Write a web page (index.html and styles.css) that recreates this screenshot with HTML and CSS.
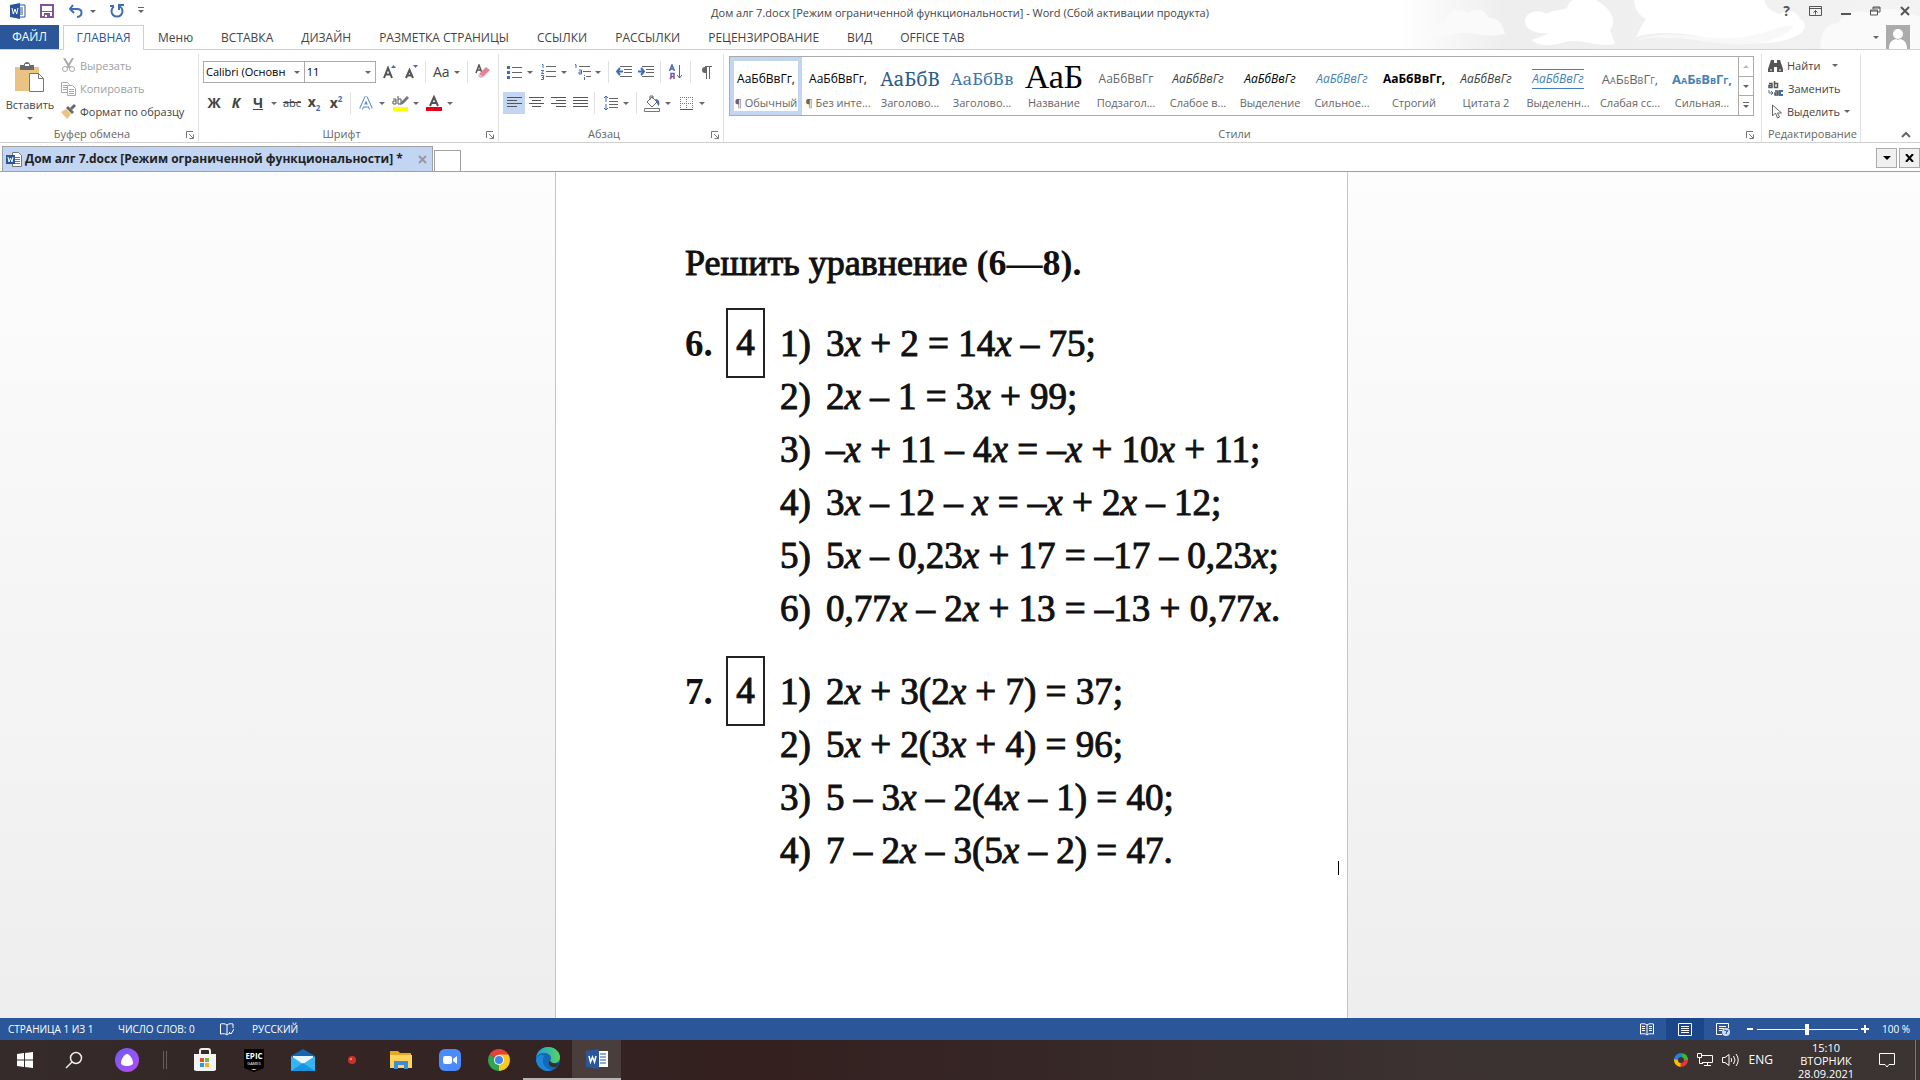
FILE: index.html
```html
<!DOCTYPE html>
<html lang="ru">
<head>
    <meta charset="UTF-8">
    <meta name="viewport" content="width=device-width, initial-scale=1.0">
    <title>Дом алг 7.docx - Word</title>
    <link rel="stylesheet" href="styles.css">
</head>
<body>
    <header class="top">
        <svg class="clouds" width="520" height="49" viewBox="0 0 520 49" aria-hidden="true">
            <defs>
                <linearGradient id="sky" x1="0" x2="1" y1="0" y2="0">
                    <stop offset="0" stop-color="#fff"/>
                    <stop offset=".2" stop-color="#eeeeee"/>
                    <stop offset="1" stop-color="#f3f3f3"/>
                </linearGradient>
            </defs>
            <rect width="520" height="49" fill="url(#sky)"/>
            <path d="M22 36c10-5 14-13 22-14 3-12 16-16 24-8 8-8 18-4 20 4 9-1 15 5 17 16-22 5-30-3-46-1s-24 8-37 3z" fill="#fafafa"/>
            <path d="M126 26c-6-14 14-18 20-12 9-6 20-2 22-8 1-5 4-6 8-6h20c14 8 22 20 14 30l5 14c-18 4-34-6-50-2-16 5-26 4-34-2 8-3 16-5 18-7-10 1-18-1-23-7z" fill="#fff"/>
            <path d="M234 0h130c2 8 8 12 16 14 8-6 18-2 20 5 8 3 6 14-6 18-24 10-50 6-78 2-26-4-52-10-80-2 4-8 6-12 10-18-8-4-12-12-12-19z" fill="#fff"/>
            <path d="M236 40c34-12 64 0 92-2 34 0 48-14 66-12-10 14-38 20-64 18-30-2-60-10-94-4z" fill="#f8f8f8"/>
            <path d="M420 49c0-14 6-26 18-26 6-10 20-14 34-10 14-8 30-4 48 4v32z" fill="#fafafa"/>
        </svg>
        <div class="titlebar">
            <div class="quick">
                <svg width="16" height="16" viewBox="0 0 16 16"><path d="M8 2h7v12H8z" fill="#fff" stroke="#2b579a"/><path d="M9 5h4M9 7h4M9 9h4M9 11h4" stroke="#2b579a"/><path d="M0 2l10-2v16L0 14z" fill="#2b579a"/><path d="M2 5l1.300 6L5 6l1.700 5L8 5" fill="none" stroke="#fff"/></svg>
                <button class="plain" aria-label="Сохранить"><svg width="14" height="14" viewBox="0 0 14 14"><path d="M1 1h12v12H1z" fill="#fff" stroke="#80539d" stroke-width="2"/><path d="M2 7h10v1H2z" fill="#80539d"/><path d="M4 9h6v4H4z" fill="#80539d"/><path d="M5 11h2v2H5z" fill="#fff"/></svg></button>
                <button class="plain undo" aria-label="Отменить"><svg width="16" height="14" viewBox="0 0 16 14"><path d="M5 1L2 5l4 4M2 5h7c6 0 6 7 0 8" fill="none" stroke="#3e6db5" stroke-width="2"/></svg><i class="caret"></i></button>
                <button class="plain" aria-label="Повторить"><svg width="14" height="14" viewBox="0 0 14 14"><path d="M4 2.500A5.500 5.500 0 1 0 10 2.500M4 2h-4M9 6V1h5" fill="none" stroke="#3e6db5" stroke-width="2"/></svg></button>
                <button class="plain" aria-label="Настройка панели"><svg width="6" height="8" viewBox="0 0 6 8"><path d="M0 .5h6" stroke="#666"/><path d="M0 3h6L3 6z" fill="#666"/></svg></button>
            </div>
            <div class="title">Дом алг 7.docx [Режим ограниченной функциональности] - Word (Сбой активации продукта)</div>
            <div class="winbtns">
                <button class="plain" aria-label="Справка"><b>?</b></button>
                <button class="plain" aria-label="Параметры ленты"><svg width="13" height="10" viewBox="0 0 13 10"><path d="M.5.5h12v9H.5zM1 2.500h11M6.500 8.500v-4M4.500 6.500l2-2 2 2" fill="none" stroke="#555"/></svg></button>
                <button class="plain" aria-label="Свернуть"><svg width="10" height="10" viewBox="0 0 10 10"><path d="M0 7h10v2H0z" fill="#555"/></svg></button>
                <button class="plain" aria-label="Восстановить"><svg width="11" height="10" viewBox="0 0 11 10"><path d="M3 3V1h7v5H8M.5 4h7v5h-7zM.5 5h7M3 2h7" fill="none" stroke="#555"/></svg></button>
                <button class="plain" aria-label="Закрыть"><svg width="10" height="10" viewBox="0 0 10 10"><path d="M1 1l8 8M9 1L1 9" stroke="#555" stroke-width="2"/></svg></button>
            </div>
        </div>
        <nav class="tabs">
            <button class="file">ФАЙЛ</button>
            <button class="tab active">ГЛАВНАЯ</button>
            <button class="tab">Меню</button>
            <button class="tab">ВСТАВКА</button>
            <button class="tab">ДИЗАЙН</button>
            <button class="tab">РАЗМЕТКА СТРАНИЦЫ</button>
            <button class="tab">ССЫЛКИ</button>
            <button class="tab">РАССЫЛКИ</button>
            <button class="tab">РЕЦЕНЗИРОВАНИЕ</button>
            <button class="tab">ВИД</button>
            <button class="tab">OFFICE TAB</button>
            <button class="plain account" aria-label="Учетная запись"><i class="caret"></i><svg width="24" height="24" viewBox="0 0 24 24"><path d="M0 0h24v24H0z" fill="#ababab"/><circle cx="12" cy="9" r="5" fill="#fff"/><path d="M3 24c0-7 3-9 7-10l2 1 2-1c4 1 7 3 7 10z" fill="#fff"/></svg></button>
        </nav>
    </header>

    <main class="ribbon">
        <section class="group clipboard">
            <div class="content">
                <button class="plain paste">
                    <svg width="30" height="31" viewBox="0 0 30 31"><path d="M0 5h24v24H0z" fill="#eac282"/><path d="M5 3h4c0-4 6-4 6 0h4v5H5z" fill="#6a6a6a"/><path d="M10 3h4" stroke="#fff" stroke-width="2"/><path d="M14.500 11.500h9l5 5v13h-14z" fill="#fff" stroke="#777"/><path d="M23.500 11.500v5h5" fill="none" stroke="#777"/></svg>
                    <span>Вставить</span>
                    <i class="caret"></i>
                </button>
                <div class="list">
                    <button class="plain off"><svg width="15" height="15" viewBox="0 0 15 15"><path d="M3 0l6 10M12 0L6 10" stroke="#aaa" stroke-width="2"/><circle cx="4" cy="11" r="2.500" fill="none" stroke="#aaa"/><circle cx="11" cy="11" r="2.500" fill="none" stroke="#aaa"/></svg>Вырезать</button>
                    <button class="plain off"><svg width="15" height="15" viewBox="0 0 15 15"><path d="M.5 1.500h6l2 2v8h-8zM2 4.500h4M2 6.500h4M2 8.500h4" fill="#fff" stroke="#aaa"/><path d="M6.500 4.500h5l3 3v7h-8zM8 8.500h5M8 10.500h5M8 12.500h5" fill="#fff" stroke="#aaa"/></svg>Копировать</button>
                    <button class="plain"><svg width="15" height="15" viewBox="0 0 15 15"><path d="M0 8l5-3 5 5-4 5z" fill="#eac282"/><path d="M5 4l2-2 6 6-2 2z" fill="#666"/><path d="M9 4l4-4 2 2-4 4z" fill="#666"/></svg>Формат по образцу</button>
                </div>
            </div>
            <div class="label">Буфер обмена<button class="plain launch" aria-label="Буфер обмена"><svg width="8" height="8" viewBox="0 0 8 8"><path d="M.5 7V.5H7M3 3l4 4M7.500 3.500v4h-4" fill="none" stroke="#777"/></svg></button></div>
        </section>

        <section class="group font">
            <div class="content rows">
                <div class="row">
                    <label class="combo name"><select aria-label="Шрифт"><option>Calibri (Основн</option></select><i class="caret"></i></label>
                    <label class="combo size"><select aria-label="Размер шрифта"><option>11</option></select><i class="caret"></i></label>
                    <button class="tool" aria-label="Увеличить размер"><svg width="13" height="14" viewBox="0 0 13 14"><path d="M1 13L5 3l4 10M2.500 9.500h5" fill="none" stroke="#555" stroke-width="2"/><path d="M8 3l2.500-3L13 3z" fill="#3e6db5"/></svg></button>
                    <button class="tool" aria-label="Уменьшить размер"><svg width="13" height="14" viewBox="0 0 13 14"><path d="M1 13L4.500 5 8 13M2.500 10.500h4" fill="none" stroke="#555" stroke-width="2"/><path d="M8 0l2.500 3L13 0z" fill="#3e6db5"/></svg></button>
                    <i class="sep"></i>
                    <button class="tool split" aria-label="Регистр"><span class="face">Aa</span><i class="caret"></i></button>
                    <i class="sep"></i>
                    <button class="tool" aria-label="Очистить формат"><svg width="16" height="16" viewBox="0 0 16 16"><path d="M1 9l3-8 3 8M2 6h4" fill="none" stroke="#555" stroke-width="1.500"/><path d="M4 10l7-7 4 3-7 7z" fill="#e8819b"/><path d="M4 10l4 3-1 1H5l-2-2z" fill="#f4b5c3"/></svg></button>
                </div>
                <div class="row">
                    <button class="tool"><b>Ж</b></button>
                    <button class="tool"><b class="it">К</b></button>
                    <button class="tool split"><span class="face"><b class="un">Ч</b></span><i class="caret"></i></button>
                    <button class="tool"><s>abc</s></button>
                    <button class="tool"><b>x<sub>2</sub></b></button>
                    <button class="tool"><b>x<sup>2</sup></b></button>
                    <i class="sep"></i>
                    <button class="tool split" aria-label="Текстовые эффекты"><span class="face"><svg width="14" height="15" viewBox="0 0 14 15"><path d="M2 13L7 2l5 11M4 9.500h6" fill="none" stroke="#4f86c6" stroke-width="4" stroke-linejoin="round"/><path d="M2 13L7 2l5 11M4 9.500h6" fill="none" stroke="#fff" stroke-width="2"/></svg></span><i class="caret"></i></button>
                    <button class="tool split" aria-label="Цвет выделения"><span class="face"><svg width="17" height="17" viewBox="0 0 17 17"><path d="M1 12h15v4H1z" fill="#ff0"/><path d="M1 4h3v5H1V6h3M6 1v8h3V4H6" fill="none" stroke="#555"/><path d="M8 10l1-3 6-6 2 2-6 6z" fill="#777"/></svg></span><i class="caret"></i></button>
                    <button class="tool split" aria-label="Цвет текста"><span class="face"><svg width="16" height="17" viewBox="0 0 16 17"><path d="M4 11L8 2l4 9M5.500 8h5" fill="none" stroke="#555" stroke-width="2"/><path d="M0 12h16v4H0z" fill="#e3001b"/></svg></span><i class="caret"></i></button>
                </div>
            </div>
            <div class="label">Шрифт<button class="plain launch" aria-label="Шрифт"><svg width="8" height="8" viewBox="0 0 8 8"><path d="M.5 7V.5H7M3 3l4 4M7.500 3.500v4h-4" fill="none" stroke="#777"/></svg></button></div>
        </section>

        <section class="group para">
            <div class="content rows">
                <div class="row">
                    <button class="tool split" aria-label="Маркеры"><span class="face"><svg width="15" height="15" viewBox="0 0 15 15"><path d="M5 2.500h10M5 7.500h10M5 12.500h10" stroke="#666"/><path d="M0 1h3v3H0zM0 6h3v3H0zM0 11h3v3H0z" fill="#3e6db5"/></svg></span><i class="caret"></i></button>
                    <button class="tool split" aria-label="Нумерация"><span class="face"><svg width="15" height="16" viewBox="0 0 15 16"><path d="M5 2.500h10M5 7.500h10M5 12.500h10" stroke="#666"/><path d="M1 .5h1V4M0 6.500h2.500L.5 9.500H3M0 11.500h2.500v4H0M1 13.500h1" fill="none" stroke="#3e6db5"/></svg></span><i class="caret"></i></button>
                    <button class="tool split" aria-label="Многоуровневый список"><span class="face"><svg width="17" height="16" viewBox="0 0 17 16"><path d="M5 2.500h11M9 7.500h8M12 12.500h5" stroke="#666"/><path d="M1 .5h1V4M5 6h2.500v4H5V8h2M10.500 11v1M10.500 13v3" fill="none" stroke="#3e6db5"/></svg></span><i class="caret"></i></button>
                    <i class="sep"></i>
                    <button class="tool" aria-label="Уменьшить отступ"><svg width="16" height="12" viewBox="0 0 16 12"><path d="M4 .5h12M8 3.500h8M8 6.500h8M4 10.500h12" stroke="#666"/><path d="M7 5.500H1M4 2L1 5.500 4 9" fill="none" stroke="#3e6db5" stroke-width="2"/></svg></button>
                    <button class="tool" aria-label="Увеличить отступ"><svg width="16" height="12" viewBox="0 0 16 12"><path d="M4 .5h12M8 3.500h8M8 6.500h8M4 10.500h12" stroke="#666"/><path d="M0 5.500h6M3 2l3 3.500L3 9" fill="none" stroke="#3e6db5" stroke-width="2"/></svg></button>
                    <i class="sep"></i>
                    <button class="tool" aria-label="Сортировка"><svg width="14" height="16" viewBox="0 0 14 16"><path d="M.5 7l2.500-6 2.500 6M1.500 5h3" fill="none" stroke="#3e6db5" stroke-width="1.500"/><path d="M5 15V9.500H2v3h3M3 12.500L1 15" fill="none" stroke="#80539d" stroke-width="1.500"/><path d="M10.500 1v13M8 11l2.500 3 2.500-3" fill="none" stroke="#666"/></svg></button>
                    <i class="sep"></i>
                    <button class="tool" aria-label="Знаки абзаца"><svg width="11" height="13" viewBox="0 0 11 13"><path d="M5 1H4a3 3 0 0 0 0 6h1z" fill="#666"/><path d="M11 .5H4M5.500 0v13M8.500 0v13" fill="none" stroke="#666"/></svg></button>
                </div>
                <div class="row">
                    <button class="tool on" aria-label="По левому краю"><svg width="15" height="12" viewBox="0 0 15 12"><path d="M0 .5h15M0 3.500h10M0 6.500h15M0 9.500h10" stroke="#555"/></svg></button>
                    <button class="tool" aria-label="По центру"><svg width="15" height="12" viewBox="0 0 15 12"><path d="M0 .5h15M3 3.500h9M0 6.500h15M3 9.500h9" stroke="#555"/></svg></button>
                    <button class="tool" aria-label="По правому краю"><svg width="15" height="12" viewBox="0 0 15 12"><path d="M0 .5h15M5 3.500h10M0 6.500h15M5 9.500h10" stroke="#555"/></svg></button>
                    <button class="tool" aria-label="По ширине"><svg width="15" height="12" viewBox="0 0 15 12"><path d="M0 .5h15M0 3.500h15M0 6.500h15M0 9.500h15" stroke="#555"/></svg></button>
                    <i class="sep"></i>
                    <button class="tool split" aria-label="Интервал"><span class="face"><svg width="15" height="16" viewBox="0 0 15 16"><path d="M6 3.500h9M6 6.500h9M6 9.500h9M6 12.500h9" stroke="#666"/><path d="M3 1v6M3 9v6M1 3l2-2 2 2M1 13l2 2 2-2" fill="none" stroke="#3e6db5"/></svg></span><i class="caret"></i></button>
                    <i class="sep"></i>
                    <button class="tool split" aria-label="Заливка"><span class="face"><svg width="17" height="17" viewBox="0 0 17 17"><path d="M3 7l5-5 5 5-5 5zM6 5V1h3v3" fill="#fff" stroke="#666"/><path d="M11 4c4 0 5 3 4 7-2-1-2-3-2-4z" fill="#3e6db5"/><path d="M.5 13.500h15v3H.5z" fill="#fff" stroke="#777"/></svg></span><i class="caret"></i></button>
                    <button class="tool split" aria-label="Границы"><span class="face"><svg width="13" height="13" viewBox="0 0 13 13"><path d="M.5 0v12M6.500 0v12M12.500 0v12M0 .5h13M0 6.500h13" stroke="#777" stroke-dasharray="1 1"/><path d="M0 12.500h13" stroke="#555"/></svg></span><i class="caret"></i></button>
                </div>
            </div>
            <div class="label">Абзац<button class="plain launch" aria-label="Абзац"><svg width="8" height="8" viewBox="0 0 8 8"><path d="M.5 7V.5H7M3 3l4 4M7.500 3.500v4h-4" fill="none" stroke="#777"/></svg></button></div>
        </section>

        <section class="group styles">
            <div class="gallery">
                <button class="style chosen"><span class="demo">АаБбВвГг,</span><span>¶ Обычный</span></button>
                <button class="style"><span class="demo">АаБбВвГг,</span><span>¶ Без инте...</span></button>
                <button class="style"><span class="demo head1">АаБбВ</span><span>Заголово...</span></button>
                <button class="style"><span class="demo head2">АаБбВв</span><span>Заголово...</span></button>
                <button class="style"><span class="demo big">АаБ</span><span>Название</span></button>
                <button class="style"><span class="demo grey">АаБбВвГг</span><span>Подзагол...</span></button>
                <button class="style"><span class="demo it soft">АаБбВвГг</span><span>Слабое в...</span></button>
                <button class="style"><span class="demo it">АаБбВвГг</span><span>Выделение</span></button>
                <button class="style"><span class="demo it blue">АаБбВвГг</span><span>Сильное...</span></button>
                <button class="style"><span class="demo strong">АаБбВвГг,</span><span>Строгий</span></button>
                <button class="style"><span class="demo it soft">АаБбВвГг</span><span>Цитата 2</span></button>
                <button class="style"><span class="demo it blue lined">АаБбВвГг</span><span>Выделенн...</span></button>
                <button class="style"><span class="demo caps grey">АаБбВвГг,</span><span>Слабая сс...</span></button>
                <button class="style"><span class="demo caps strong blue">АаБбВвГг,</span><span>Сильная...</span></button>
                <div class="scroller">
                    <button class="plain" aria-label="Вверх"><i class="caret up"></i></button>
                    <button class="plain" aria-label="Вниз"><i class="caret"></i></button>
                    <button class="plain" aria-label="Все стили"><svg width="6" height="7" viewBox="0 0 6 7"><path d="M0 .5h6" stroke="#666"/><path d="M0 3h6L3 6z" fill="#666"/></svg></button>
                </div>
            </div>
            <div class="label">Стили<button class="plain launch" aria-label="Стили"><svg width="8" height="8" viewBox="0 0 8 8"><path d="M.5 7V.5H7M3 3l4 4M7.500 3.500v4h-4" fill="none" stroke="#777"/></svg></button></div>
        </section>

        <section class="group edit">
            <div class="content list">
                <button class="plain"><svg width="15" height="14" viewBox="0 0 15 14"><path d="M3 1h3v3h3V1h3l3 9v3h-6V8H6v5H0v-3z" fill="#555"/><path d="M2 11h2M11 11h2" stroke="#fff"/></svg>Найти<i class="caret far"></i></button>
                <button class="plain"><svg width="16" height="15" viewBox="0 0 16 15"><path d="M1 2.500h3v4H1v-2h3M6.500 0v6.500h3v-4h-3M7 10h3v4H7v-2h3" fill="none" stroke="#555" stroke-width="1.500"/><path d="M15 10h-3v4h3" fill="none" stroke="#3e6db5" stroke-width="2"/><path d="M1 9v3h4M3 10l2 2-2 2" fill="none" stroke="#3e6db5"/></svg>Заменить</button>
                <button class="plain"><svg width="15" height="15" viewBox="0 0 15 15"><path d="M4.500 1v11l3-3 2 5 2-1-2-4h4z" fill="#fff" stroke="#666"/></svg>Выделить<i class="caret"></i></button>
            </div>
            <div class="label">Редактирование</div>
        </section>
        <button class="plain collapse" aria-label="Свернуть ленту"><svg width="10" height="7" viewBox="0 0 10 7"><path d="M1 6l4-4 4 4" fill="none" stroke="#666" stroke-width="2"/></svg></button>
    </main>

    <div class="doctabs">
        <div class="doctab">
            <svg width="16" height="15" viewBox="0 0 16 15"><path d="M6.500.5h6l3 3v11h-9z" fill="#fff" stroke="#777"/><path d="M9 5.500h5M9 7.500h5M9 9.500h5M9 11.500h5" stroke="#777"/><path d="M0 3h9v9H0z" fill="#2b579a"/><path d="M2 5l1 5 1.500-4L6 10l1-5" fill="none" stroke="#fff"/></svg>
            <span>Дом алг 7.docx [Режим ограниченной функциональности] *</span>
            <button class="plain" aria-label="Закрыть вкладку"><svg width="9" height="9" viewBox="0 0 9 9"><path d="M1 1l7 7M8 1L1 8" stroke="#999" stroke-width="2"/></svg></button>
        </div>
        <button class="newtab" aria-label="Новая вкладка"></button>
        <button class="tabbtn" aria-label="Список вкладок"><i class="caret dark"></i></button>
        <button class="tabbtn" aria-label="Закрыть"><svg width="9" height="8" viewBox="0 0 9 8"><path d="M1 0l7 8M8 0L1 8" stroke="#000" stroke-width="2"/></svg></button>
    </div>

    <div class="workspace">
        <article class="page">
            <h1>Решить уравнение <b>(6—8).</b></h1>
            <section class="task">
                <b>6.</b><span class="level">4</span>
                <ol>
                    <li><span>1)</span>3<i>x</i> + 2 = 14<i>x</i> – 75;</li>
                    <li><span>2)</span>2<i>x</i> – 1 = 3<i>x</i> + 99;</li>
                    <li><span>3)</span>–<i>x</i> + 11 – 4<i>x</i> = –<i>x</i> + 10<i>x</i> + 11;</li>
                    <li><span>4)</span>3<i>x</i> – 12 – <i>x</i> = –<i>x</i> + 2<i>x</i> – 12;</li>
                    <li><span>5)</span>5<i>x</i> – 0,23<i>x</i> + 17 = –17 – 0,23<i>x</i>;</li>
                    <li><span>6)</span>0,77<i>x</i> – 2<i>x</i> + 13 = –13 + 0,77<i>x</i>.</li>
                </ol>
            </section>
            <section class="task">
                <b>7.</b><span class="level">4</span>
                <ol>
                    <li><span>1)</span>2<i>x</i> + 3(2<i>x</i> + 7) = 37;</li>
                    <li><span>2)</span>5<i>x</i> + 2(3<i>x</i> + 4) = 96;</li>
                    <li><span>3)</span>5 – 3<i>x</i> – 2(4<i>x</i> – 1) = 40;</li>
                    <li><span>4)</span>7 – 2<i>x</i> – 3(5<i>x</i> – 2) = 47.</li>
                </ol>
            </section>
            <i class="cursor"></i>
        </article>
    </div>

    <footer class="status">
        <span class="pages">СТРАНИЦА 1 ИЗ 1</span>
        <span class="words">ЧИСЛО СЛОВ: 0</span>
        <svg width="14" height="13" viewBox="0 0 14 13"><path d="M7 2v10M7 2C5 .5 3 .5.5 1v10c3-.5 5-.5 6.500 1 1-1 2-1.500 3-1.500M7 2c2-1.500 4-1.500 6-1v4M9 9l2 2 3-5" fill="none" stroke="#fff"/></svg>
        <span class="lang">РУССКИЙ</span>
        <div class="views">
            <button class="plain" aria-label="Режим чтения"><svg width="14" height="13" viewBox="0 0 14 13"><path d="M7 2v10M7 2C5 .5 3 .5.5 1v10c3-.5 5-.5 6.500 1 1.500-1.500 3.500-1.500 6.500-1V1C11 .5 9 .5 7 2M2 3.500h3M2 5.500h3M2 7.500h3M9 3.500h3M9 5.500h3M9 7.500h3" fill="none" stroke="#fff"/></svg></button>
            <button class="plain picked" aria-label="Разметка страницы"><svg width="14" height="13" viewBox="0 0 14 13"><path d="M.5.5h13v12H.5zM3 3.500h8M3 5.500h8M3 7.500h8M3 9.500h8" fill="none" stroke="#fff"/></svg></button>
            <button class="plain" aria-label="Веб-документ"><svg width="14" height="13" viewBox="0 0 14 13"><path d="M6 11.500H.5V.5h12V5M3 3.500h7M3 5.500h5M3 7.500h3" fill="none" stroke="#fff"/><circle cx="10" cy="9" r="4" fill="#cfdcf0"/><path d="M8 7l3 1-1 3M12 7l-1 2" stroke="#2b579a" fill="none"/></svg></button>
        </div>
        <button class="plain" aria-label="Уменьшить"><svg width="8" height="8" viewBox="0 0 8 8"><path d="M1 3h6v2H1z" fill="#fff"/></svg></button>
        <input class="zoom" type="range" min="0" max="100" value="50" aria-label="Масштаб">
        <button class="plain" aria-label="Увеличить"><svg width="8" height="8" viewBox="0 0 8 8"><path d="M0 3h8v2H0zM3 0h2v8H3z" fill="#fff"/></svg></button>
        <span class="percent">100 %</span>
    </footer>

    <footer class="taskbar">
        <button class="app" aria-label="Пуск"><svg width="16" height="16" viewBox="0 0 16 16"><path d="M0 2l7-1v6.500H0zM8 1l8-1v7.500H8zM0 8.500h7V15l-7-1zM8 8.500h8V16l-8-1z" fill="#fff"/></svg></button>
        <button class="app" aria-label="Поиск"><svg width="18" height="18" viewBox="0 0 18 18"><circle cx="11" cy="7" r="5.500" fill="none" stroke="#eee" stroke-width="1.500"/><path d="M7 11l-6 6" stroke="#eee" stroke-width="1.500"/></svg></button>
        <button class="app alice" aria-label="Алиса"><svg width="24" height="24" viewBox="0 0 24 24"><defs><linearGradient id="al" x1="0" x2="1" y1="0" y2="1"><stop offset="0" stop-color="#6f5cf5"/><stop offset="1" stop-color="#b34cf2"/></linearGradient></defs><circle cx="12" cy="12" r="12" fill="url(#al)"/><path d="M12 6c3 0 6 6 6 9 0 4-12 4-12 0 0-3 3-9 6-9z" fill="#fff"/></svg></button>
        <i class="split-line"></i>
        <button class="app" aria-label="Store"><svg width="24" height="24" viewBox="0 0 24 24"><path d="M7 7V3q0-2 2-2h6q2 0 2 2v4" fill="none" stroke="#eee" stroke-width="2"/><path d="M1 6h22v16l-2 1H3l-2-1z" fill="#f3f3f3"/><path d="M7 10h4v4H7z" fill="#d8572a"/><path d="M12 10h4v4h-4z" fill="#7cb542"/><path d="M7 15h4v4H7z" fill="#2a9bd8"/><path d="M12 15h4v4h-4z" fill="#f3b21c"/></svg></button>
        <button class="app" aria-label="Epic Games"><svg width="22" height="24" viewBox="0 0 22 24"><path d="M1 1h20v19l-10 4-10-4z" fill="#000"/><path d="M8 21h6l-3 1z" fill="#fff"/><text class="epic" x="11" y="11" text-anchor="middle">EPIC</text><text class="epic-sub" x="11" y="17" text-anchor="middle">GAMES</text></svg></button>
        <button class="app" aria-label="Почта"><svg width="24" height="24" viewBox="0 0 24 24"><path d="M0 8l12-7 12 7v15H0z" fill="#1266b4"/><path d="M2 8h20v10H2z" fill="#eaf4fb"/><path d="M0 8l12 8L24 8v15H0z" fill="#35b5f1"/><path d="M0 23l12-8 12 8z" fill="#1c93dd"/></svg></button>
        <button class="app" aria-label="Запись"><svg width="8" height="8" viewBox="0 0 8 8"><circle cx="4" cy="4" r="4" fill="#c8322a"/><circle cx="3" cy="3" r="1" fill="#f5a79a"/></svg></button>
        <button class="app" aria-label="Проводник"><svg width="22" height="20" viewBox="0 0 22 20"><path d="M0 1h8l2 2h11v15H0z" fill="#e8a820"/><path d="M0 5h22v13H0z" fill="#ffd45c"/><path d="M4 11h14v8h-4v-4H8v4H4z" fill="#3c8fd6"/></svg></button>
        <button class="app" aria-label="Zoom"><svg width="24" height="24" viewBox="0 0 24 24"><rect x="1" y="1" width="22" height="22" rx="6" fill="#4a8cff"/><rect x="5" y="8" width="9" height="8" rx="2" fill="#fff"/><path d="M15 11l4-3v8l-4-3z" fill="#fff"/></svg></button>
        <button class="app" aria-label="Chrome"><svg width="22" height="22" viewBox="0 0 22 22"><path d="M11 11L1.500 5.500A11 11 0 0 1 20.500 5.500z" fill="#e0443a"/><path d="M11 11L1.500 5.500A11 11 0 0 0 11 22z" fill="#31a450"/><path d="M11 11v11A11 11 0 0 0 20.500 5.500H11z" fill="#fbc91c"/><circle cx="11" cy="11" r="5" fill="#fff"/><circle cx="11" cy="11" r="4" fill="#4286f0"/></svg></button>
        <button class="app open" aria-label="Edge"><svg width="24" height="24" viewBox="0 0 24 24"><defs><linearGradient id="eg" x1="0" x2="1"><stop offset="0" stop-color="#1b9de2"/><stop offset="1" stop-color="#5bd65b"/></linearGradient></defs><circle cx="12" cy="12" r="12" fill="#1468b8"/><path d="M0 11C1 4 6 0 12 0c7 0 12 5 12 10 0 4-3 6-6 6-3 0-4-1-4-2s1-1 1-3c0-3-3-5-7-5-4 0-7 2-8 5z" fill="url(#eg)"/><path d="M8 9c-3 6 0 13 8 14-7 3-15-2-16-10 1-5 6-6 8-4z" fill="#1e86d8"/><path d="M14 13c0 3 4 4 9 3-1 2-2 3-3 4-6 1-9-3-6-7z" fill="#352f2e"/></svg></button>
        <button class="app open current" aria-label="Word"><svg width="22" height="20" viewBox="0 0 22 20"><path d="M11 2h11v16H11z" fill="#fff"/><path d="M14 5h6M14 8h6M14 11h6M14 14h6" stroke="#2b579a"/><path d="M0 2l13-2v20L0 18z" fill="#2b579a"/><path d="M3 7l1.500 6L6.500 8l2 5L10 7" fill="none" stroke="#fff" stroke-width="1.500"/></svg></button>
        <div class="tray">
            <svg width="14" height="14" viewBox="0 0 14 14"><circle cx="7" cy="7" r="5" fill="none" stroke="#e33" stroke-width="4" stroke-dasharray="8 24"/><circle cx="7" cy="7" r="5" fill="none" stroke="#fb0" stroke-width="4" stroke-dasharray="8 24" stroke-dashoffset="-8"/><circle cx="7" cy="7" r="5" fill="none" stroke="#2a7de1" stroke-width="4" stroke-dasharray="8 24" stroke-dashoffset="-16"/><circle cx="7" cy="7" r="5" fill="none" stroke="#3b3" stroke-width="4" stroke-dasharray="8 24" stroke-dashoffset="-24"/></svg>
            <svg width="16" height="14" viewBox="0 0 16 14"><path d="M5 2.500h10.500v7H5M2.500 4v6.500H6M10.500 9.500v3M7 12.500h7M.5.500h4v4h-4z" fill="none" stroke="#fff"/></svg>
            <svg width="18" height="14" viewBox="0 0 18 14"><path d="M.5 4.500H3l4-3v11l-4-3H.5zM9 5q1.500 2 0 4M11.500 3q3 4 0 8M14 1q4.500 6 0 12" fill="none" stroke="#fff"/></svg>
            <span>ENG</span>
            <div class="clock">15:10<br>ВТОРНИК<br>28.09.2021</div>
            <svg width="16" height="16" viewBox="0 0 16 16"><path d="M.5 1.500h15v11H10l-2 2.500-2-2.500H.5z" fill="none" stroke="#fff"/></svg>
        </div>
    </footer>
</body>
</html>
```
FILE: styles.css
```css
* {
    box-sizing: border-box;
}
body {
    margin: 0;
    height: 100vh;
    display: flex;
    flex-direction: column;
    overflow: hidden;
    font-family: "Open Sans", sans-serif;
    font-size: 12px;
    line-height: 16px;
    color: #444;
    background-color: #fff;
}
button, select, input {
    font: inherit;
    color: inherit;
    margin: 0;
}
button {
    padding: 0;
    border: none;
    background: none;
    white-space: nowrap;
}
svg {
    display: block;
    flex: none;
}
.plain {
    display: flex;
    align-items: center;
    justify-content: center;
}
.caret {
    flex: none;
    border: 3px solid transparent;
    border-top-color: #666;
    border-bottom: none;
}
.caret.up {
    border-top: none;
    border-bottom: 3px solid #bbb;
}
.caret.dark {
    border-width: 4px;
    border-bottom: none;
    border-top-color: #000;
}

/* title and tabs */
.top {
    position: relative;
    border-bottom: 1px solid #d0d0d0;
}
.clouds {
    position: absolute;
    right: 0;
    top: 0;
}
.titlebar {
    position: relative;
    display: grid;
    grid-template-columns: 1fr auto 1fr;
    height: 25px;
    padding: 0 10px;
}
.quick {
    display: flex;
    align-items: center;
    gap: 14px;
    height: 22px;
}
.undo {
    gap: 6px;
}
.title {
    font-size: 11px;
    line-height: 26px;
}
.winbtns {
    display: flex;
    justify-content: flex-end;
    gap: 19px;
    height: 22px;
    color: #555;
    font-size: 14px;
}
.tabs {
    position: relative;
    display: flex;
    height: 24px;
}
.file {
    width: 59px;
    margin-right: 4px;
    background-color: #2b579a;
    color: #fff;
}
.tab {
    padding: 2px 14px 0;
}
.tab.active {
    width: 81px;
    padding: 0;
    background-color: #fff;
    border: 1px solid #d0d0d0;
    border-bottom: none;
    margin-bottom: -1px;
    color: #2b579a;
}
.account {
    margin-left: auto;
    margin-right: 10px;
    gap: 7px;
}

/* ribbon */
.ribbon {
    display: flex;
    height: 93px;
    padding-top: 4px;
    border-bottom: 1px solid #d0d0d0;
    font-size: 11px;
}
.group {
    flex: none;
    display: flex;
    flex-direction: column;
    justify-content: space-between;
    padding: 0 4px;
    border-right: 1px solid #e1e1e1;
}
.clipboard {
    width: 199px;
}
.font {
    width: 300px;
}
.para {
    width: 225px;
}
.styles {
    flex: 1;
    min-width: 0;
    padding: 2px 7px 0 5px;
}
.edit {
    width: 99px;
    padding: 0 6px;
}
.label {
    position: relative;
    padding-right: 14px;
    text-align: center;
    color: #666;
}
.edit .label {
    padding-right: 0;
}
.launch {
    position: absolute;
    right: 0;
    top: 5px;
}
.content {
    display: flex;
}
.paste {
    flex-direction: column;
    width: 52px;
    gap: 4px;
    padding-top: 4px;
}
.list {
    display: flex;
    flex-direction: column;
}
.list .plain {
    height: 23px;
    justify-content: flex-start;
    gap: 4px;
}
.clipboard .list {
    padding-left: 5px;
}
.off {
    color: #a0a0a0;
}
.far {
    margin-left: 8px;
}
.rows {
    flex-direction: column;
    gap: 9px;
    padding-top: 7px;
}
.row {
    display: flex;
    height: 22px;
}
.combo {
    display: flex;
    align-items: center;
    border: 1px solid #ababab;
    padding-right: 4px;
    color: #000;
}
.combo + .combo {
    border-left: none;
}
.combo select {
    flex: 1;
    min-width: 0;
    padding: 0 2px;
    border: none;
    background: none;
    appearance: none;
}
.name {
    width: 102px;
}
.size {
    width: 72px;
    margin-right: 2px;
}
.tool {
    display: flex;
    align-items: center;
    justify-content: center;
    width: 22px;
    height: 22px;
    font-size: 14px;
}
.tool s {
    font-size: 11px;
}
.tool sub, .tool sup {
    font-size: 8px;
    line-height: 8px;
    color: #3e6db5;
}
.split {
    width: 34px;
    justify-content: flex-start;
    gap: 2px;
}
.face {
    display: flex;
    justify-content: center;
    width: 22px;
}
.on {
    background-color: #c2d5f2;
}
.un {
    text-decoration: underline;
}
.it {
    font-style: italic;
}
.sep {
    width: 1px;
    margin: 0 4px 0 3px;
    background-color: #e1e1e1;
}

/* style gallery */
.gallery {
    display: grid;
    grid-template-columns: repeat(14, minmax(0, 1fr)) 15px;
    height: 60px;
    border: 1px solid #ababab;
}
.style {
    display: flex;
    flex-direction: column;
    align-items: center;
    justify-content: flex-end;
    padding-bottom: 4px;
    color: #666;
}
.chosen {
    padding: 0;
    border: 4px solid #c2d5f2;
}
.demo {
    height: 30px;
    line-height: 30px;
    color: #000;
    font-size: 12px;
    margin-bottom: 1px;
}
.head1, .head2 {
    font-family: "Noto Serif", "Liberation Serif", serif;
    color: #2e5c8a;
    font-size: 19px;
}
.head2 {
    font-size: 17px;
    color: #3f77ac;
}
.big {
    font-family: "Liberation Serif", serif;
    font-size: 34px;
    line-height: 26px;
}
.grey {
    color: #666;
}
.soft {
    color: #404040;
}
.blue {
    color: #4481b5;
}
.strong {
    font-weight: bold;
}
.caps {
    font-variant: small-caps;
    font-size: 13px;
}
.lined {
    height: 20px;
    line-height: 18px;
    margin-bottom: 6px;
    border-top: 1px solid #4481b5;
    border-bottom: 1px solid #4481b5;
}
.scroller {
    display: flex;
    flex-direction: column;
    border-left: 1px solid #ababab;
}
.scroller .plain {
    flex: 1;
}
.scroller .plain + .plain {
    border-top: 1px solid #ababab;
}
.collapse {
    flex: none;
    align-self: flex-end;
    width: 59px;
    height: 16px;
    padding-left: 30px;
}

/* document tabs */
.doctabs {
    display: flex;
    align-items: flex-end;
    height: 29px;
    padding-left: 2px;
    border-bottom: 1px solid #a0a0a0;
}
.doctab {
    display: flex;
    align-items: center;
    gap: 3px;
    width: 431px;
    height: 25px;
    padding: 0 5px 0 3px;
    border: 1px solid #a0a0a0;
    border-bottom: none;
    background-color: #c2d5f2;
    color: #222;
    font-weight: bold;
}
.doctab .plain {
    margin-left: auto;
}
.newtab {
    width: 27px;
    height: 21px;
    margin: 0 auto 0 1px;
    border: 1px solid #a0a0a0;
    border-bottom: none;
}
.tabbtn {
    display: flex;
    align-items: center;
    justify-content: center;
    width: 21px;
    height: 20px;
    margin: 0 0 3px 2px;
    border: 1px solid #ababab;
    background-color: #f0f0f0;
}

/* page */
.workspace {
    flex: 1;
    min-height: 0;
    display: flex;
    justify-content: center;
    padding-right: 17px;
    background-image: linear-gradient(#fdfdfd, #eeeeee);
}
.page {
    position: relative;
    width: 793px;
    padding: 65px 0 0 129px;
    border: 1px solid #c6c6c6;
    border-top: none;
    border-bottom: none;
    background-color: #fff;
    color: #111;
    font-family: "Liberation Serif", serif;
    font-size: 37px;
    line-height: 53px;
    -webkit-text-stroke: 1px #111;
}
.page b {
    -webkit-text-stroke: 0;
}
.page h1 {
    margin: 0 0 27px;
    font-size: 36px;
    font-weight: normal;
}
.task {
    display: flex;
    margin-bottom: 30px;
}
.task > b {
    width: 41px;
}
.level {
    width: 39px;
    height: 70px;
    margin: -9px 15px 0 0;
    border: 2px solid #222;
    line-height: 66px;
    text-align: center;
}
.task ol {
    margin: 0;
    padding: 0;
    list-style: none;
}
.task li {
    display: flex;
    white-space: pre;
}
.task li span {
    width: 46px;
}
.cursor {
    position: absolute;
    right: 8px;
    top: 689px;
    width: 1px;
    height: 14px;
    background-color: #000;
}

/* status bar */
.status {
    display: flex;
    align-items: center;
    height: 22px;
    padding: 0 10px 0 8px;
    background-color: #2b579a;
    color: #fff;
    font-size: 10px;
}
.pages {
    width: 110px;
}
.words {
    width: 102px;
}
.lang {
    margin: 0 auto 0 18px;
}
.views {
    display: flex;
    align-self: stretch;
    margin-right: 4px;
}
.views .plain {
    width: 38px;
}
.views .picked {
    background-color: #1b468a;
}
.zoom {
    width: 101px;
    height: 12px;
    margin: 0 3px;
    appearance: none;
    background: linear-gradient(#fff, #fff) center / 100% 1px no-repeat;
}
.zoom::-webkit-slider-thumb {
    appearance: none;
    width: 4px;
    height: 11px;
    background-color: #fff;
}
.percent {
    margin-left: 13px;
}

/* taskbar */
.taskbar {
    display: flex;
    height: 40px;
    background-image: linear-gradient(90deg, #352b2a, #33201f 40%, #3b3231 75%, #3a3433);
    color: #fff;
}
.app {
    display: flex;
    align-items: center;
    justify-content: center;
    width: 49px;
}
.app.alice {
    width: 57px;
}
.split-line {
    width: 4px;
    height: 18px;
    margin: 11px 13px 0 8px;
    border: 1px solid #665c5b;
    border-top: none;
    border-bottom: none;
}
.open {
    border-bottom: 2px solid #b9b4b3;
}
.current {
    background-color: #4a3e3d;
}
.epic {
    font-size: 8px;
    font-weight: bold;
    fill: #fff;
}
.epic-sub {
    font-size: 4px;
    fill: #fff;
}
.tray {
    display: flex;
    align-items: center;
    gap: 9px;
    margin-left: auto;
    padding-right: 20px;
    border-right: 1px solid #777;
    margin-right: 4px;
}
.clock {
    width: 88px;
    font-size: 11px;
    line-height: 13px;
    text-align: center;
}
```
